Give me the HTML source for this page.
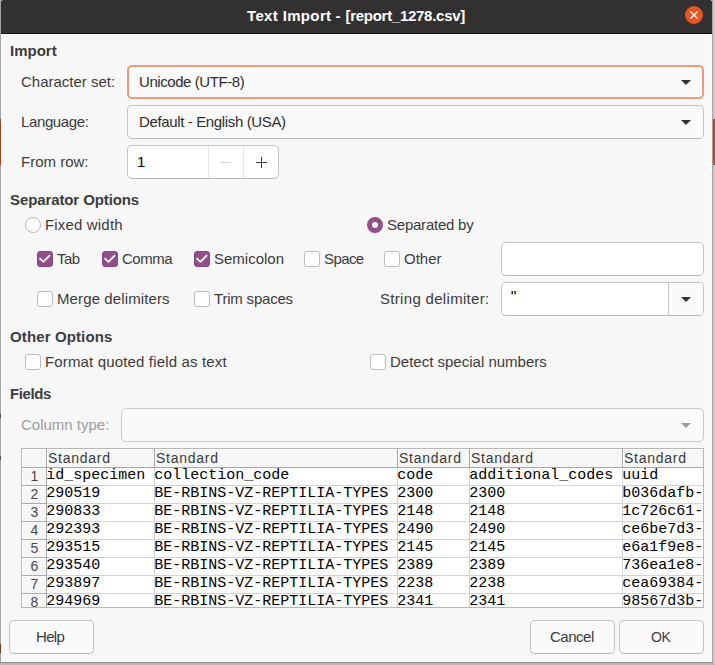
<!DOCTYPE html>
<html><head><meta charset="utf-8">
<style>
*{box-sizing:border-box;margin:0;padding:0}
html,body{width:715px;height:665px;overflow:hidden;background:#d6d6d6}
body{position:relative;font-family:"Liberation Sans",sans-serif;font-size:15px;color:#3c3c3c}
.a{position:absolute}
.t{position:absolute;white-space:pre;line-height:15px;height:15px}
.b{font-weight:bold}
#dlg{position:absolute;left:0;top:0;width:713px;height:663px;background:#f7f7f7}
#title{position:absolute;left:1px;top:0;width:711px;height:33px;background:#323030;border-radius:2px 2px 0 0}
.ctl{position:absolute;border:1px solid #c4c4c4;border-bottom-color:#b8b8b8;border-radius:5px;background:#fafafa}
.ent{background:#fff}
.cb{position:absolute;width:16px;height:16px;border:1px solid #bcbcbc;border-radius:3px;background:#fff}
.cb.on{background:#924d8b;border-color:#8a4584}
.rd{position:absolute;width:16px;height:16px;border:1px solid #bcbcbc;border-radius:50%;background:#fff}
.arrow{position:absolute;width:0;height:0;border-left:5px solid transparent;border-right:5px solid transparent;border-top:5px solid #333}
.ht{position:absolute;white-space:pre;font-size:14px;line-height:14px;letter-spacing:0.75px;color:#3c3c3c}
.rn{position:absolute;width:25px;text-align:center;font-size:14px;line-height:18px;color:#4a4a4a}
.md{position:absolute;white-space:pre;font-family:"Liberation Mono",monospace;font-size:15px;line-height:18px;color:#000}
.btn{position:absolute;border:1px solid #c4c4c4;border-bottom-color:#b4b4b4;border-radius:5px;background:#fafafa;top:620px;height:34px}
</style></head><body>
<div class="a" style="left:713px;top:0;width:2px;height:665px;background:#cacaca"></div>
<div class="a" style="left:0;top:663px;width:715px;height:2px;background:#bababa"></div>
<div class="a" style="left:713px;top:119px;width:2px;height:46px;background:#b84a22"></div>
<div id="dlg"></div>
<div id="title"></div>
<div class="a" style="left:1px;top:33px;width:711px;height:1px;background:#151515"></div>
<div class="a" style="left:1px;top:34px;width:711px;height:1px;background:#fefefe"></div>
<div class="a" style="left:1px;top:34px;width:1px;height:628px;background:#fdfdfd"></div>
<div class="a" style="left:1px;top:661px;width:711px;height:1px;background:#fdfdfd"></div>
<div class="a" style="left:0;top:0;width:1px;height:663px;background:#a4a4a4"></div>
<div class="a" style="left:0;top:119px;width:1px;height:46px;background:#a8401c"></div>
<div class="a" style="left:0;top:414px;width:1px;height:4px;background:#6a4a3a"></div>
<div class="a" style="left:0;top:456px;width:1px;height:4px;background:#555"></div>
<div class="a" style="left:0;top:644px;width:1px;height:9px;background:#6a3a1c"></div>
<div class="a" style="left:712px;top:0;width:1px;height:663px;background:#a4a4a4"></div>
<div class="a" style="left:0;top:662px;width:713px;height:1px;background:#8c8c8c"></div>
<div class="a" style="left:711px;top:35px;width:1px;height:627px;background:#fcfcfc"></div>
<div class="t b" style="left:247px;top:8px;color:#fff;letter-spacing:0.35px">Text Import</div><div class="t b" style="left:335.5px;top:8px;color:#fff">-</div><div class="t b" style="left:345.5px;top:8px;color:#fff;letter-spacing:-0.28px">[report_1278.csv]</div>
<!-- close button -->
<div class="a" style="left:685px;top:6px;width:18px;height:18px;border-radius:50%;background:#e95420"></div>
<svg class="a" style="left:685px;top:6px" width="18" height="18"><path d="M5.5 5.5L12.5 12.5M12.5 5.5L5.5 12.5" stroke="#fff" stroke-width="1.3"/></svg>

<div class="t b" style="left:10px;top:43px">Import</div>
<div class="t" style="left:21px;top:74px">Character set:</div>
<div class="ctl" style="left:127px;top:65px;width:577px;height:34px;border:2px solid #eb9a7c"></div>
<div class="t" style="left:139px;top:74px;color:#2e2e2e;letter-spacing:-0.429px">Unicode (UTF-8)</div>
<div class="arrow" style="left:681px;top:80px"></div>
<div class="t" style="left:21px;top:114px;letter-spacing:-0.375px">Language:</div>
<div class="ctl" style="left:127px;top:105px;width:577px;height:34px"></div>
<div class="t" style="left:139px;top:114px;color:#2e2e2e;letter-spacing:-0.364px">Default - English (USA)</div>
<div class="arrow" style="left:681px;top:120px"></div>
<div class="t" style="left:21px;top:154px">From row:</div>
<div class="ctl ent" style="left:127px;top:145px;width:152px;height:34px"></div>
<div class="a" style="left:208px;top:146px;width:1px;height:32px;background:#e8e8e8"></div>
<div class="a" style="left:243px;top:146px;width:1px;height:32px;background:#e8e8e8"></div>
<div class="t" style="left:137px;top:154px;color:#000">1</div>
<div class="a" style="left:221px;top:162px;width:10px;height:1px;background:#d0d0d0"></div>
<div class="a" style="left:256px;top:162px;width:11px;height:1px;background:#3a3a3a"></div>
<div class="a" style="left:261px;top:157px;width:1px;height:11px;background:#3a3a3a"></div>

<div class="t b" style="left:10px;top:192px;letter-spacing:-0.106px">Separator Options</div>
<div class="rd" style="left:25px;top:217px"></div>
<div class="t" style="left:45px;top:217px;letter-spacing:0.17px">Fixed width</div>
<div class="rd" style="left:367px;top:217px;border:5px solid #924d8b;background:#fff"></div>
<div class="t" style="left:387px;top:217px;letter-spacing:-0.227px">Separated by</div>

<div class="cb on" style="left:37px;top:251px"><svg width="16" height="16" style="position:absolute;left:-1px;top:-1px"><path d="M2.5 7.2L6.4 10.8L13.1 4.1" fill="none" stroke="#fff" stroke-width="1.8"/></svg></div>
<div class="t" style="left:57px;top:251px;letter-spacing:-0.5px">Tab</div>
<div class="cb on" style="left:102px;top:251px"><svg width="16" height="16" style="position:absolute;left:-1px;top:-1px"><path d="M2.5 7.2L6.4 10.8L13.1 4.1" fill="none" stroke="#fff" stroke-width="1.8"/></svg></div>
<div class="t" style="left:122px;top:251px;letter-spacing:-0.5px">Comma</div>
<div class="cb on" style="left:194px;top:251px"><svg width="16" height="16" style="position:absolute;left:-1px;top:-1px"><path d="M2.5 7.2L6.4 10.8L13.1 4.1" fill="none" stroke="#fff" stroke-width="1.8"/></svg></div>
<div class="t" style="left:214px;top:251px">Semicolon</div>
<div class="cb" style="left:304px;top:251px"></div>
<div class="t" style="left:324px;top:251px;letter-spacing:-0.6px">Space</div>
<div class="cb" style="left:384px;top:251px"></div>
<div class="t" style="left:404px;top:251px">Other</div>
<div class="ctl ent" style="left:501px;top:242px;width:203px;height:34px"></div>

<div class="cb" style="left:37px;top:291px"></div>
<div class="t" style="left:57px;top:291px;letter-spacing:0.113px">Merge delimiters</div>
<div class="cb" style="left:194px;top:291px"></div>
<div class="t" style="left:214px;top:291px;letter-spacing:-0.2px">Trim spaces</div>
<div class="t" style="left:380px;top:291px;letter-spacing:0.312px">String delimiter:</div>
<div class="ctl ent" style="left:501px;top:282px;width:203px;height:34px"></div>
<div class="a" style="left:668px;top:283px;width:35px;height:32px;background:#fafafa;border-left:1px solid #c8c8c8;border-radius:0 4px 4px 0"></div>
<div class="t" style="left:510.8px;top:290.3px;color:#000;font-size:16px">"</div>
<div class="arrow" style="left:681px;top:297px"></div>

<div class="t b" style="left:10px;top:329px;letter-spacing:0.125px">Other Options</div>
<div class="cb" style="left:25px;top:354px"></div>
<div class="t" style="left:45px;top:354px;letter-spacing:0.154px">Format quoted field as text</div>
<div class="cb" style="left:370px;top:354px"></div>
<div class="t" style="left:390px;top:354px">Detect special numbers</div>

<div class="t b" style="left:10px;top:386px;letter-spacing:-0.4px">Fields</div>
<div class="t" style="left:21px;top:417px;color:#9c9c9c">Column type:</div>
<div class="ctl" style="left:121px;top:408px;width:583px;height:34px;background:#fafafa;border-color:#cacaca"></div>
<div class="arrow" style="left:681px;top:423px;border-top-color:#999"></div>

<div id="tbl" class="a" style="left:21px;top:448px;width:683px;height:160px;background:#fff;border:1px solid #b8b8b8;overflow:hidden"><div class="a" style="left:0px;top:0px;width:681px;height:18px;background:#f6f6f6"></div><div class="a" style="left:0px;top:0px;width:24px;height:158px;background:#f6f6f6"></div><div class="a" style="left:0px;top:0px;width:681px;height:1px;background:#fff"></div><div class="a" style="left:0px;top:0px;width:1px;height:158px;background:#fff"></div><div class="a" style="left:25px;top:36px;width:656px;height:1px;background:#d4d4d4"></div><div class="a" style="left:0px;top:36px;width:24px;height:1px;background:#ababab"></div><div class="a" style="left:0px;top:37px;width:24px;height:1px;background:#fdfdfd"></div><div class="a" style="left:25px;top:54px;width:656px;height:1px;background:#d4d4d4"></div><div class="a" style="left:0px;top:54px;width:24px;height:1px;background:#ababab"></div><div class="a" style="left:0px;top:55px;width:24px;height:1px;background:#fdfdfd"></div><div class="a" style="left:25px;top:72px;width:656px;height:1px;background:#d4d4d4"></div><div class="a" style="left:0px;top:72px;width:24px;height:1px;background:#ababab"></div><div class="a" style="left:0px;top:73px;width:24px;height:1px;background:#fdfdfd"></div><div class="a" style="left:25px;top:90px;width:656px;height:1px;background:#d4d4d4"></div><div class="a" style="left:0px;top:90px;width:24px;height:1px;background:#ababab"></div><div class="a" style="left:0px;top:91px;width:24px;height:1px;background:#fdfdfd"></div><div class="a" style="left:25px;top:108px;width:656px;height:1px;background:#d4d4d4"></div><div class="a" style="left:0px;top:108px;width:24px;height:1px;background:#ababab"></div><div class="a" style="left:0px;top:109px;width:24px;height:1px;background:#fdfdfd"></div><div class="a" style="left:25px;top:126px;width:656px;height:1px;background:#d4d4d4"></div><div class="a" style="left:0px;top:126px;width:24px;height:1px;background:#ababab"></div><div class="a" style="left:0px;top:127px;width:24px;height:1px;background:#fdfdfd"></div><div class="a" style="left:25px;top:144px;width:656px;height:1px;background:#d4d4d4"></div><div class="a" style="left:0px;top:144px;width:24px;height:1px;background:#ababab"></div><div class="a" style="left:0px;top:145px;width:24px;height:1px;background:#fdfdfd"></div><div class="a" style="left:25px;top:162px;width:656px;height:1px;background:#d4d4d4"></div><div class="a" style="left:0px;top:162px;width:24px;height:1px;background:#ababab"></div><div class="a" style="left:0px;top:163px;width:24px;height:1px;background:#fdfdfd"></div><div class="a" style="left:0px;top:19px;width:24px;height:1px;background:#fdfdfd"></div><div class="a" style="left:0px;top:18px;width:681px;height:1px;background:#a8a8a8"></div><div class="a" style="left:132px;top:19px;width:1px;height:140px;background:#d4d4d4"></div><div class="a" style="left:132px;top:0px;width:1px;height:18px;background:#a8a8a8"></div><div class="a" style="left:133px;top:0px;width:1px;height:18px;background:#fff"></div><div class="a" style="left:375px;top:19px;width:1px;height:140px;background:#d4d4d4"></div><div class="a" style="left:375px;top:0px;width:1px;height:18px;background:#a8a8a8"></div><div class="a" style="left:376px;top:0px;width:1px;height:18px;background:#fff"></div><div class="a" style="left:447px;top:19px;width:1px;height:140px;background:#d4d4d4"></div><div class="a" style="left:447px;top:0px;width:1px;height:18px;background:#a8a8a8"></div><div class="a" style="left:448px;top:0px;width:1px;height:18px;background:#fff"></div><div class="a" style="left:600px;top:19px;width:1px;height:140px;background:#d4d4d4"></div><div class="a" style="left:600px;top:0px;width:1px;height:18px;background:#a8a8a8"></div><div class="a" style="left:601px;top:0px;width:1px;height:18px;background:#fff"></div><div class="a" style="left:24px;top:0px;width:1px;height:158px;background:#a8a8a8"></div><div class="a" style="left:25px;top:0px;width:1px;height:18px;background:#fff"></div><div class="ht" style="left:26px;top:2px">Standard</div><div class="ht" style="left:134px;top:2px">Standard</div><div class="ht" style="left:377px;top:2px">Standard</div><div class="ht" style="left:449px;top:2px">Standard</div><div class="ht" style="left:602px;top:2px">Standard</div><div class="rn" style="left:0px;top:18px">1</div><div class="md" style="left:24.299999999999997px;top:18px">id_specimen</div><div class="md" style="left:132.3px;top:18px">collection_code</div><div class="md" style="left:375.3px;top:18px">code</div><div class="md" style="left:447.3px;top:18px">additional_codes</div><div class="md" style="left:600.3px;top:18px">uuid</div><div class="rn" style="left:0px;top:36px">2</div><div class="md" style="left:24.299999999999997px;top:36px">290519</div><div class="md" style="left:132.3px;top:36px">BE-RBINS-VZ-REPTILIA-TYPES</div><div class="md" style="left:375.3px;top:36px">2300</div><div class="md" style="left:447.3px;top:36px">2300</div><div class="md" style="left:600.3px;top:36px">b036dafb-</div><div class="rn" style="left:0px;top:54px">3</div><div class="md" style="left:24.299999999999997px;top:54px">290833</div><div class="md" style="left:132.3px;top:54px">BE-RBINS-VZ-REPTILIA-TYPES</div><div class="md" style="left:375.3px;top:54px">2148</div><div class="md" style="left:447.3px;top:54px">2148</div><div class="md" style="left:600.3px;top:54px">1c726c61-</div><div class="rn" style="left:0px;top:72px">4</div><div class="md" style="left:24.299999999999997px;top:72px">292393</div><div class="md" style="left:132.3px;top:72px">BE-RBINS-VZ-REPTILIA-TYPES</div><div class="md" style="left:375.3px;top:72px">2490</div><div class="md" style="left:447.3px;top:72px">2490</div><div class="md" style="left:600.3px;top:72px">ce6be7d3-</div><div class="rn" style="left:0px;top:90px">5</div><div class="md" style="left:24.299999999999997px;top:90px">293515</div><div class="md" style="left:132.3px;top:90px">BE-RBINS-VZ-REPTILIA-TYPES</div><div class="md" style="left:375.3px;top:90px">2145</div><div class="md" style="left:447.3px;top:90px">2145</div><div class="md" style="left:600.3px;top:90px">e6a1f9e8-</div><div class="rn" style="left:0px;top:108px">6</div><div class="md" style="left:24.299999999999997px;top:108px">293540</div><div class="md" style="left:132.3px;top:108px">BE-RBINS-VZ-REPTILIA-TYPES</div><div class="md" style="left:375.3px;top:108px">2389</div><div class="md" style="left:447.3px;top:108px">2389</div><div class="md" style="left:600.3px;top:108px">736ea1e8-</div><div class="rn" style="left:0px;top:126px">7</div><div class="md" style="left:24.299999999999997px;top:126px">293897</div><div class="md" style="left:132.3px;top:126px">BE-RBINS-VZ-REPTILIA-TYPES</div><div class="md" style="left:375.3px;top:126px">2238</div><div class="md" style="left:447.3px;top:126px">2238</div><div class="md" style="left:600.3px;top:126px">cea69384-</div><div class="rn" style="left:0px;top:144px">8</div><div class="md" style="left:24.299999999999997px;top:144px">294969</div><div class="md" style="left:132.3px;top:144px">BE-RBINS-VZ-REPTILIA-TYPES</div><div class="md" style="left:375.3px;top:144px">2341</div><div class="md" style="left:447.3px;top:144px">2341</div><div class="md" style="left:600.3px;top:144px">98567d3b-</div></div>

<div class="btn" style="left:9px;width:85px"></div>
<div class="t" style="left:36px;top:629px;letter-spacing:-0.667px">Help</div>
<div class="btn" style="left:530px;width:85px"></div>
<div class="t" style="left:550px;top:629px;letter-spacing:-0.48px">Cancel</div>
<div class="btn" style="left:619px;width:85px"></div>
<div class="t" style="left:651px;top:629.5px;font-size:14px;letter-spacing:-0.3px">OK</div>
</body></html>
